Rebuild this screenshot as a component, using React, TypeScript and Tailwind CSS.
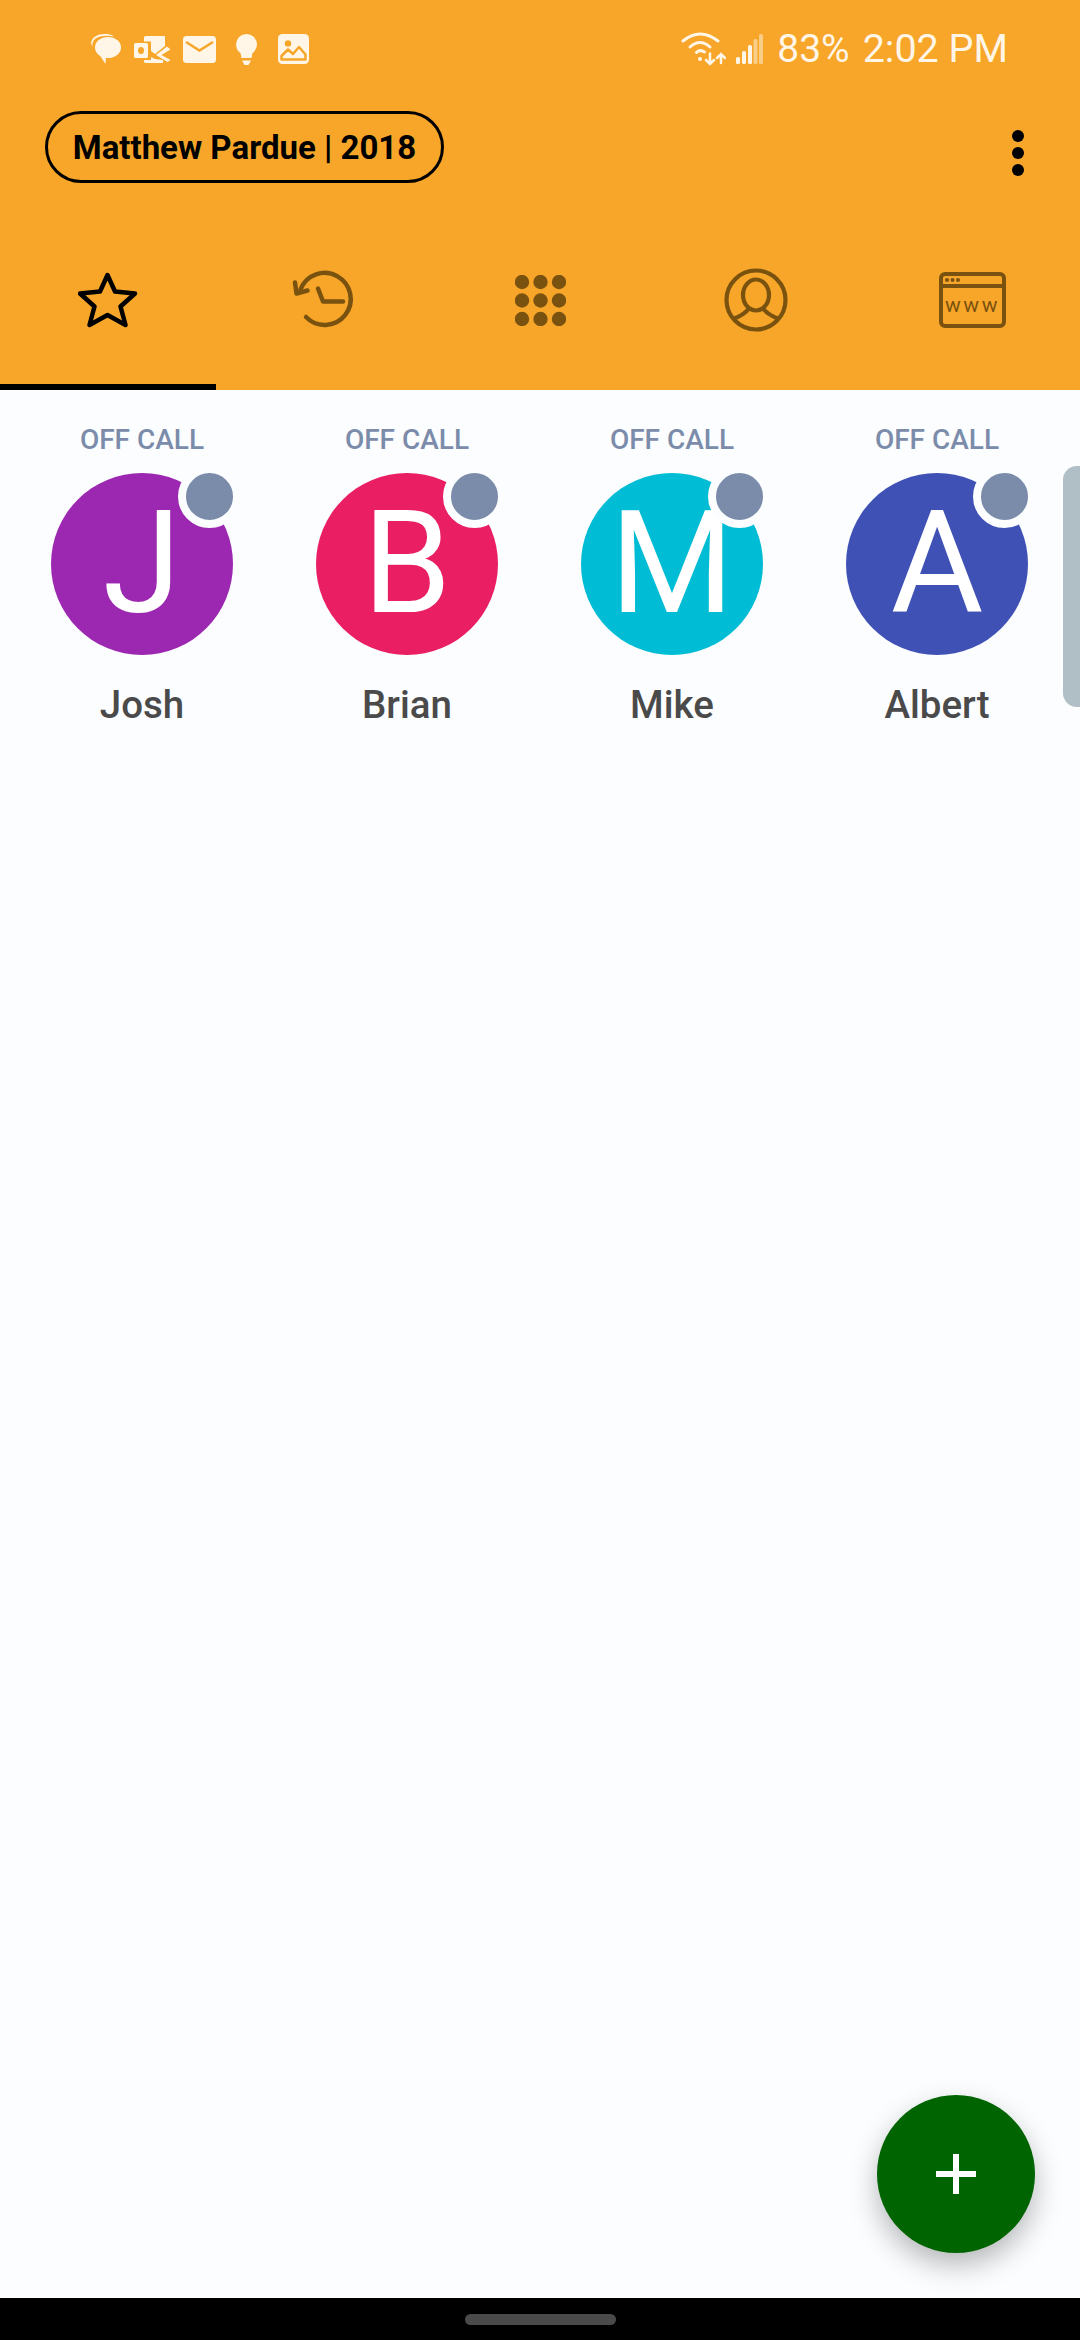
const fg = "#fff6e8";
const bg = "#f7a629";
const dim = "#7a5210";

function Chat() {
  return (
    <svg width="31" height="30" viewBox="0 0 31 30" className="shrink-0">
      <path d="M1 9C2 3 8 0 14 0c4 0 8 .6 10 2.500C18 1 9 1.500 5 5 3 7 2 9 2.500 13Z" fill={fg} />
      <ellipse cx="18" cy="13.500" rx="13" ry="10.500" fill={fg} />
      <path d="M9 20l6.500 10 .5-7Z" fill={fg} />
    </svg>
  );
}

function Outlook() {
  return (
    <svg width="37" height="29" viewBox="0 0 37 29" className="shrink-0">
      <path fillRule="evenodd" d="M1.500 8h11A1.500 1.500 0 0 1 14 9.500v12a1.500 1.500 0 0 1-1.500 1.500h-11A1.500 1.500 0 0 1 0 21.500v-12A1.500 1.500 0 0 1 1.500 8Zm5.500 4a3 3.500 0 1 0 0 7 3 3.500 0 1 0 0-7Z" fill={fg} />
      <path d="M10 2.500A1.500 1.500 0 0 1 11.500 1H31v10l-10 8-4-3V6.500h-7Z" fill={fg} />
      <path d="M22 20l11-8.500 3.500 3-9 5.500 9 5-3 2Z" fill={fg} />
      <path d="M10 25h7v-3l4 2 8 1v3H11.500A1.500 1.500 0 0 1 10 26.500Z" fill={fg} />
    </svg>
  );
}

function Mail() {
  return (
    <svg width="33" height="27" viewBox="0 0 33 27" className="shrink-0">
      <rect width="33" height="27" rx="3.500" fill={fg} />
      <path d="M3 6l13.500 8.500L30 6" fill="none" stroke={bg} strokeWidth="2.500" />
    </svg>
  );
}

function Bulb() {
  return (
    <svg width="21" height="31" viewBox="0 0 21 31" className="shrink-0">
      <circle cx="10.500" cy="10.500" r="10.500" fill={fg} />
      <path d="M4 16h13l-1.500 8h-10Z" fill={fg} />
      <path d="M6 26.500h9L12.500 31h-4Z" fill={fg} />
    </svg>
  );
}

function ImageIcon() {
  return (
    <svg width="31" height="30" viewBox="0 0 31 30" className="shrink-0">
      <rect width="31" height="30" rx="4.500" fill={fg} />
      <circle cx="10" cy="9.500" r="3.200" fill={bg} />
      <path d="M3.500 25.500V22l6.500-6.500 5 4.500 6-7 6.500 7.500v5Z" fill="none" stroke={bg} strokeWidth="2.500" strokeLinejoin="round" />
    </svg>
  );
}

function Wifi() {
  return (
    <svg width="46" height="34" viewBox="0 0 46 34" fill="none" stroke={fg} strokeWidth="3" strokeLinecap="round" className="shrink-0">
      <path d="M3 9Q20-5 38 9" />
      <path d="M10 15Q20 6 30 15" />
      <path d="M16.500 20.500Q20 17 24.500 20" />
      <circle cx="20" cy="27" r="2" fill={fg} stroke="none" />
      <path d="M30 21.500V32M26 28l4 4 4-4" strokeWidth="2.500" />
      <path d="M41 31V22M37 26l4-4 4 4" strokeWidth="2.500" />
    </svg>
  );
}

function Signal() {
  return (
    <svg width="27" height="30" viewBox="0 0 27 30" className="shrink-0" fill={fg}>
      <rect x="0" y="23" width="4" height="7" rx="1.500" />
      <rect x="6" y="17" width="4" height="13" rx="1.500" />
      <rect x="12" y="11" width="4" height="19" rx="1.500" />
      <rect x="17.500" y="5" width="4" height="25" rx="1.500" opacity="0.5" />
      <rect x="23" y="0" width="4" height="30" rx="1.500" opacity="0.5" />
    </svg>
  );
}

function Star() {
  return (
    <svg width="60" height="56" viewBox="0 0 60 56" fill="none" stroke="#000" strokeWidth="4.500" strokeLinejoin="round">
      <path d="M29.500 3 37 19.500l20 2L42.500 34.500 47.500 53 29.500 43 11.500 53l5-18.500L2 21.500l20-2Z" />
    </svg>
  );
}

function History() {
  return (
    <svg width="68" height="65" viewBox="0 1.500 68 65" fill="none" stroke={dim} strokeWidth="4.500" strokeLinecap="round" strokeLinejoin="round">
      <path d="M10.500 23A26 26 0 1 1 16 50.500" />
      <path d="M5 16l1.500 11 11-3" />
      <path d="M28 22l5 13h20" />
    </svg>
  );
}

function Dial() {
  const xs = [7, 25.500, 44];
  return (
    <svg width="51" height="51" viewBox="0 0 51 51" fill={dim}>
      {xs.map((y) => xs.map((x) => <circle key={`${x}-${y}`} cx={x} cy={y} r="7.200" />))}
    </svg>
  );
}

function Profile() {
  return (
    <svg width="64" height="64" viewBox="0 0 64 64" fill="none" stroke={dim} strokeWidth="4.200">
      <circle cx="32" cy="32" r="29.500" />
      <ellipse cx="32" cy="27" rx="13" ry="15.500" />
      <path d="M9 51Q20 47 25 40.500M55 51Q44 47 39 40.500" />
    </svg>
  );
}

function Web() {
  return (
    <svg width="67" height="56" viewBox="0 0 67 56" fill="none" stroke={dim} strokeWidth="4">
      <rect x="2" y="2" width="63" height="52" rx="4" />
      <path d="M2 14h63" />
      <g fill={dim} stroke="none">
        <circle cx="8" cy="8" r="2" />
        <circle cx="13.500" cy="8" r="2" />
        <circle cx="19" cy="8" r="2" />
      </g>
      <text x="33.500" y="40" textAnchor="middle" fill={dim} stroke="none" fontSize="21" letterSpacing="2.500" fontFamily="Roboto, sans-serif" fontWeight="400">www</text>
    </svg>
  );
}

const tabs = [
  { key: "star", icon: <Star />, active: true },
  { key: "history", icon: <History />, active: false },
  { key: "dial", icon: <Dial />, active: false },
  { key: "profile", icon: <Profile />, active: false },
  { key: "web", icon: <Web />, active: false },
];

const contacts = [
  { name: "Josh", initial: "J", color: "bg-[#9c27b0]" },
  { name: "Brian", initial: "B", color: "bg-[#e91e63]" },
  { name: "Mike", initial: "M", color: "bg-[#00bcd4]" },
  { name: "Albert", initial: "A", color: "bg-[#3f51b5]" },
];

export default function App() {
  return (
    <div className="relative flex h-[2340px] w-[1080px] flex-col overflow-hidden bg-[#fbfdff] font-['Roboto',sans-serif]">
      <header className="flex h-[390px] shrink-0 flex-col bg-[#f7a629]">
        <div className="flex h-[32px] mt-[33px] items-center justify-between pl-[90px] pr-[72px] text-[#fff6e8]">
          <div className="flex items-center">
            <Chat />
            <div className="ml-[13px]"><Outlook /></div>
            <div className="ml-[12px]"><Mail /></div>
            <div className="ml-[20px]"><Bulb /></div>
            <div className="ml-[21px]"><ImageIcon /></div>
          </div>
          <div className="flex items-center">
            <Wifi />
            <div className="ml-[10px]"><Signal /></div>
            <span className="ml-[14px] text-[39px] leading-[32px]">83%</span>
            <span className="ml-[13px] text-[39.500px] leading-[32px]">2:02 PM</span>
          </div>
        </div>
        <div className="mt-[46px] flex items-start justify-between pl-[45px] pr-[56px]">
          <div className="flex h-[72px] w-[399px] items-center justify-center rounded-full border-[3px] border-black">
            <span className="text-[33px] leading-none font-bold text-black whitespace-nowrap">Matthew Pardue | 2018</span>
          </div>
          <div className="mt-[19px] flex flex-col gap-[5px]">
            <span className="h-[12px] w-[12px] rounded-full bg-black" />
            <span className="h-[12px] w-[12px] rounded-full bg-black" />
            <span className="h-[12px] w-[12px] rounded-full bg-black" />
          </div>
        </div>
        <nav className="mt-auto grid grid-cols-5">
          {tabs.map((t) => (
            <div
              key={t.key}
              className={`flex h-[122px] items-start justify-center border-b-[6px] ${t.active ? "border-black" : "border-transparent"}`}
            >
              <div className="flex h-[64px] items-center justify-center">{t.icon}</div>
            </div>
          ))}
        </nav>
      </header>

      <main className="flex-1 pl-[9.500px]">
        <div className="grid w-[1060px] grid-cols-4">
          {contacts.map((c) => (
            <div key={c.name} className="flex flex-col items-center pt-[36px]">
              <div className="text-[28px] leading-[28px] font-medium text-[#7b8cab]">OFF CALL</div>
              <div className={`relative mt-[19px] flex h-[182px] w-[182px] items-center justify-center rounded-full ${c.color}`}>
                <span className="text-[142px] leading-none text-white">{c.initial}</span>
                <span className="absolute right-[-8px] top-[-8px] h-[63px] w-[63px] rounded-full border-[8px] border-[#fbfdff] bg-[#7b8cab]" />
              </div>
              <div className="mt-[30px] text-[38.500px] leading-[40px] font-medium text-[#4a4a4a]">{c.name}</div>
            </div>
          ))}
        </div>
      </main>

      <div className="absolute right-0 top-[466px] h-[241px] w-[17px] rounded-l-[14px] bg-[#b0bec5]" />

      <button className="absolute left-[877px] top-[2095px] flex h-[158px] w-[158px] items-center justify-center rounded-full bg-[#006400] shadow-[0_12px_28px_rgba(0,0,0,0.28)]">
        <svg width="40" height="40" viewBox="0 0 40 40" fill="#fff">
          <rect x="17" y="0" width="6" height="40" />
          <rect x="0" y="17" width="40" height="6" />
        </svg>
      </button>

      <footer className="flex h-[42px] shrink-0 items-start justify-center bg-black pt-[16px]">
        <div className="h-[11px] w-[151px] rounded-full bg-[#4a4a4a]" />
      </footer>
    </div>
  );
}
